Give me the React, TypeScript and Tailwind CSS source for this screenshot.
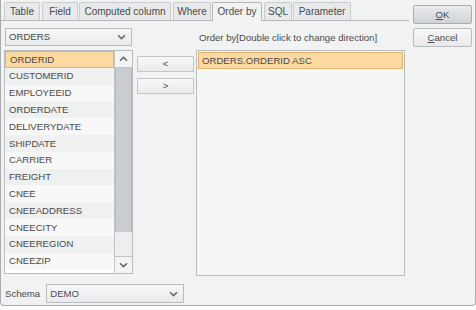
import React from "react";

const fields = [
  "ORDERID",
  "CUSTOMERID",
  "EMPLOYEEID",
  "ORDERDATE",
  "DELIVERYDATE",
  "SHIPDATE",
  "CARRIER",
  "FREIGHT",
  "CNEE",
  "CNEEADDRESS",
  "CNEECITY",
  "CNEEREGION",
  "CNEEZIP",
];

const tabs = [
  { label: "Table", cls: "w-[36px] ml-0" },
  { label: "Field", cls: "w-[36px] ml-[2px]" },
  { label: "Computed column", cls: "w-[92px] ml-[1px]" },
  { label: "Where", cls: "w-[38px] ml-[2px]" },
  { label: "Order by", cls: "w-[50px] ml-[1px]", active: true },
  { label: "SQL", cls: "w-[28px] ml-[2px]" },
  { label: "Parameter", cls: "w-[58px] ml-[1px]" },
];

function Chevron({ up = false }: { up?: boolean }) {
  return (
    <svg width="9" height="6" viewBox="0 0 9 6" className={up ? "rotate-180" : ""}>
      <path d="M1 1.2 L4.5 4.6 L8 1.2" fill="none" stroke="#666" strokeWidth="1.5" />
    </svg>
  );
}

function Combo({ text, className }: { text: string; className: string }) {
  return (
    <div
      className={`flex items-center justify-between border border-[#b9bcbf] bg-gradient-to-b from-[#f6f7f7] to-[#e9eaeb] pl-[3px] pr-[5px] ${className}`}
    >
      <span>{text}</span>
      <Chevron />
    </div>
  );
}

export default function App() {
  return (
    <div
      className="w-[476px] h-[310px] bg-white text-[9.6px] text-[#4a4a4a] leading-none"
      style={{ fontFamily: '"Liberation Sans", Arial, sans-serif' }}
    >
      <div className="h-[306px] bg-[#f1f2f2] border-l border-r border-b border-[#a9abad] rounded-b-[4px] flex">
        {/* left tabbed area */}
        <div className="w-[408px] flex flex-col">
          <div className="h-[21px] flex items-end pl-[3px] border-b border-[#b5b8ba] text-[10px]">
            {tabs.map((t) => (
              <div
                key={t.label}
                className={`${t.cls} h-[18px] flex items-center justify-center border border-b-0 rounded-t-[2px] ${
                  t.active
                    ? "bg-[#f1f2f2] border-[#b5b8ba] -mb-px h-[19px]"
                    : "bg-[#e7e9ea] border-[#c9cbcd]"
                }`}
              >
                {t.label}
              </div>
            ))}
          </div>
          <div className="flex h-[256px] pt-[7px] pl-[3px]">
            {/* left column */}
            <div className="w-[130px] flex flex-col">
              <Combo text="ORDERS" className="ml-[1px] w-[127px] h-[18px]" />
              <div className="mt-[4px] h-[224px] w-[129px] flex border border-[#b9bcbf] bg-white">
                <div className="flex-1 flex flex-col">
                  {fields.map((f, i) => (
                    <div
                      key={f}
                      className={`h-[16.8px] flex items-center pl-[4px] ${
                        i === 0
                          ? "bg-[#fdd9a2] border border-[#e3b46d] pl-[3px]"
                          : i % 2 === 1
                          ? "bg-[#eff0f0]"
                          : "bg-[#f8f8f8]"
                      }`}
                    >
                      {f}
                    </div>
                  ))}
                </div>
                <div className="w-[18px] flex flex-col border-l border-[#c3c6c9] bg-[#eceeef]">
                  <div className="h-[17px] flex items-center justify-center bg-[#f3f4f4] border-b border-[#c3c6c9]">
                    <Chevron up />
                  </div>
                  <div className="h-[164px] bg-[#c9cdd1] border-x border-[#b7bbc0]" />
                  <div className="flex-1" />
                  <div className="h-[17px] flex items-center justify-center bg-[#f3f4f4] border-t border-[#c3c6c9]">
                    <Chevron />
                  </div>
                </div>
              </div>
            </div>
            {/* middle buttons */}
            <div className="w-[62px] flex flex-col pl-[3px] pt-[28px] gap-[6px]">
              <div className="w-[57px] h-[16px] flex items-center justify-center border border-[#c3c6c9] bg-gradient-to-b from-[#f7f8f8] to-[#e9eaeb]">
                &lt;
              </div>
              <div className="w-[57px] h-[16px] flex items-center justify-center border border-[#c3c6c9] bg-gradient-to-b from-[#f7f8f8] to-[#e9eaeb]">
                &gt;
              </div>
            </div>
            {/* right column */}
            <div className="flex flex-col">
              <div className="h-[22px] flex items-center pl-[3px] -mt-[1px]">
                Order by[Double click to change direction]
              </div>
              <div className="mt-[1px] w-[209px] h-[226px] border border-[#b9bcbf] bg-[#f4f5f5] p-px">
                <div className="h-[17px] flex items-center pl-[3px] bg-[#fdd9a2] border border-[#e3b46d]">
                  ORDERS.ORDERID ASC
                </div>
              </div>
            </div>
          </div>
          <div className="flex-1 flex items-start pt-[7px] pl-[4px] gap-[6px]">
            <span className="h-[19px] flex items-center">Schema</span>
            <Combo text="DEMO" className="w-[138px] h-[19px]" />
          </div>
        </div>
        {/* right buttons */}
        <div className="flex flex-col pl-[4px] pt-[5px] gap-[4px]">
          <div className="w-[59px] h-[19px] flex items-center justify-center border border-[#a9adb1] rounded-[2px] bg-gradient-to-b from-[#e9ebec] to-[#cfd3d6]">
            <span>
              <span className="underline">O</span>K
            </span>
          </div>
          <div className="w-[59px] h-[19px] flex items-center justify-center border border-[#b9bcbf] rounded-[2px] bg-gradient-to-b from-[#f8f8f8] to-[#e8e9ea]">
            <span>
              <span className="underline">C</span>ancel
            </span>
          </div>
        </div>
      </div>
    </div>
  );
}
